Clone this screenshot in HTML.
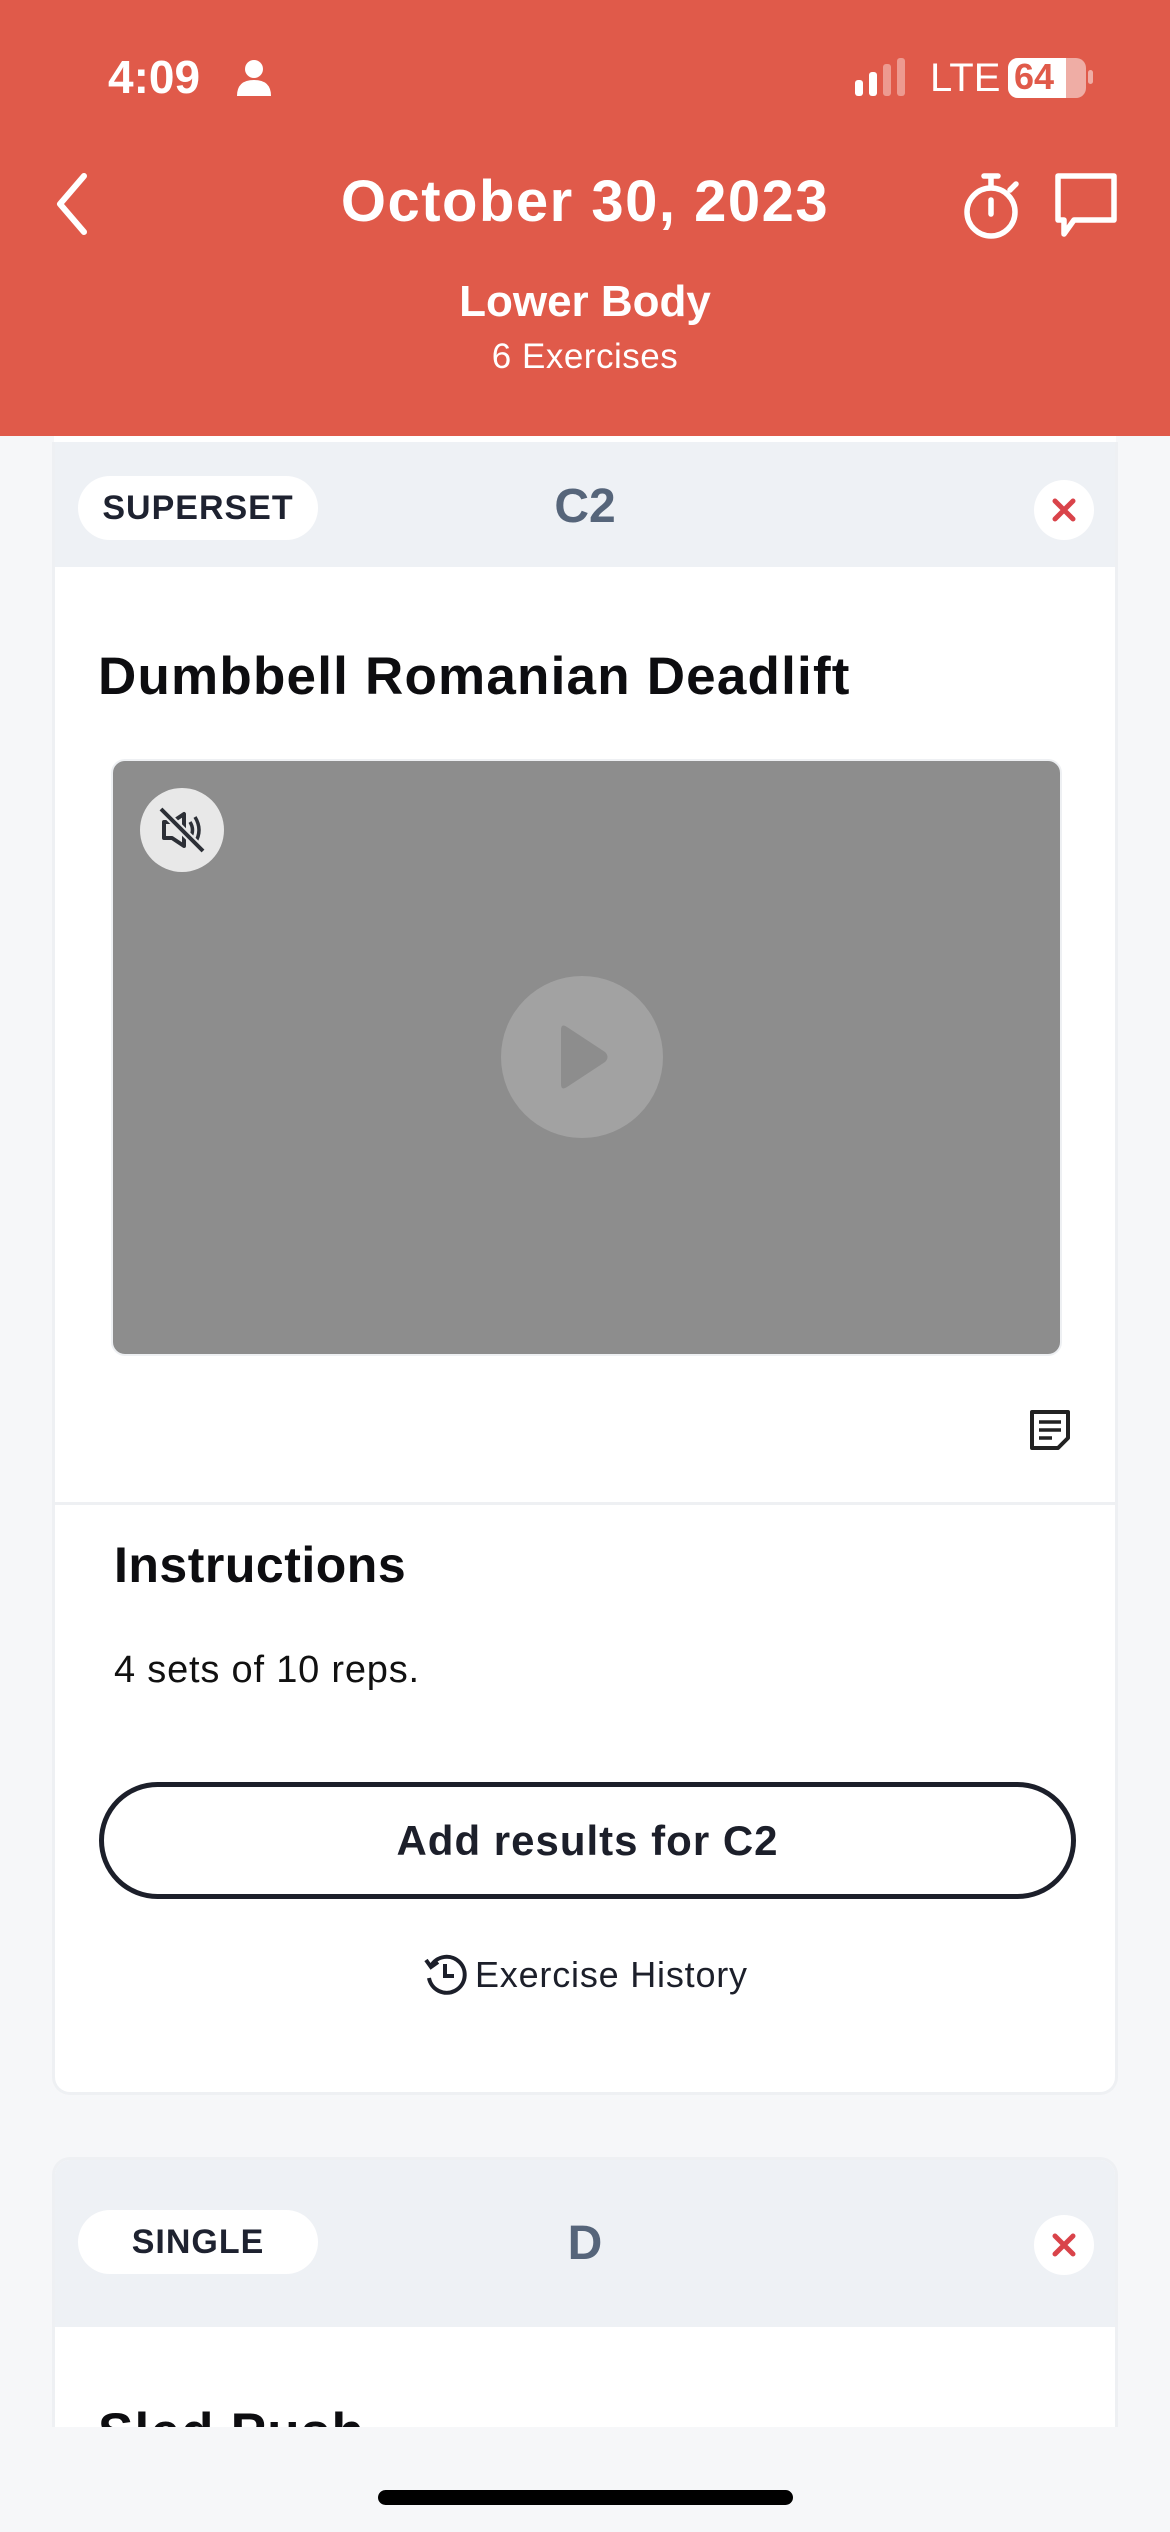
<!DOCTYPE html>
<html><head><meta charset="utf-8"><style>
*{margin:0;padding:0;box-sizing:border-box}
body{width:1170px;height:2532px;background:#f6f7f9;font-family:"Liberation Sans",sans-serif;position:relative;overflow:hidden;color:#111}
.abs{position:absolute}
.hdr{left:0;top:0;width:1170px;height:436px;background:#e05a4a;color:#fff}
.c{text-align:center;width:1170px;left:0}
.card{left:52px;width:1066px;background:#fff;border:3px solid #eef0f3;border-radius:18px;overflow:hidden}
.gh{background:#eef1f5;position:absolute;left:0;width:100%}
.pill{position:absolute;left:23px;width:240px;height:64px;background:#fff;border-radius:32px;font-size:34px;font-weight:bold;color:#1e2230;text-align:center;line-height:64px;letter-spacing:1px}
.xb{position:absolute;left:979px;width:60px;height:60px;border-radius:50%;background:#fff}
.lbl{position:absolute;left:0;width:100%;text-align:center;font-size:48px;font-weight:bold;color:#56657a}
</style></head><body>
<div class="abs hdr">
  <div class="abs" style="left:108px;top:50px;font-size:46px;font-weight:bold">4:09</div>
  <svg class="abs" style="left:234px;top:58px" width="40" height="40" viewBox="0 0 40 40"><circle cx="20" cy="11" r="9" fill="#fff"/><path d="M3 38 Q3 22 20 22 Q37 22 37 38Z" fill="#fff"/></svg>
  <svg class="abs" style="left:855px;top:58px" width="60" height="40"><rect x="0" y="22" width="8" height="16" rx="3" fill="#fff"/><rect x="14" y="14" width="8" height="24" rx="3" fill="#fff"/><rect x="28" y="6" width="8" height="32" rx="3" fill="#ed9a90"/><rect x="42" y="0" width="8" height="38" rx="3" fill="#ed9a90"/></svg>
  <div class="abs" style="left:930px;top:56px;font-size:40px">LTE</div>
  <div class="abs" style="left:1008px;top:58px;width:78px;height:40px;border-radius:10px;background:#efada5;overflow:hidden"><div style="width:58px;height:40px;background:#fff"></div></div>
  <div class="abs" style="left:1014px;top:56px;font-size:36px;font-weight:bold;color:#e05a4a">64</div>
  <div class="abs" style="left:1088px;top:70px;width:5px;height:14px;border-radius:3px;background:#efada5"></div>
  <svg class="abs" style="left:52px;top:172px" width="40" height="64" viewBox="0 0 40 64"><path d="M32 4 L8 32 L32 60" fill="none" stroke="#fff" stroke-width="6" stroke-linecap="round" stroke-linejoin="round"/></svg>
  <div class="abs c" style="top:168px;font-size:58px;font-weight:bold;letter-spacing:1.5px">October 30, 2023</div>
  <svg class="abs" style="left:960px;top:170px" width="64" height="70" viewBox="0 0 64 70"><circle cx="31" cy="42" r="24" fill="none" stroke="#fff" stroke-width="5.5"/><path d="M24 6 H38 M31 6 V17 M31 30 V44 M50 20 L56 14" stroke="#fff" stroke-width="5.5" stroke-linecap="round"/></svg>
  <svg class="abs" style="left:1054px;top:172px" width="64" height="70" viewBox="0 0 64 70"><path d="M4 4 H60 V48 H20 L10 62 V48 H4 Z" fill="none" stroke="#fff" stroke-width="5.5" stroke-linejoin="round"/></svg>
  <div class="abs c" style="top:277px;font-size:44px;font-weight:bold">Lower Body</div>
  <div class="abs c" style="top:337px;font-size:35px;letter-spacing:0.5px">6 Exercises</div>
</div>
<div class="abs" style="left:54px;top:436px;width:1062px;height:10px;background:#fff"></div>
<div class="abs card" style="top:442px;height:1653px;border-top:none;border-radius:0 0 18px 18px">
  <div class="gh" style="top:0;height:125px">
    <div class="pill" style="top:34px">SUPERSET</div>
    <div class="lbl" style="top:37px">C2</div>
    <div class="xb" style="top:38px"><svg width="60" height="60"><path d="M21 21 L39 39 M39 21 L21 39" stroke="#d9434a" stroke-width="5" stroke-linecap="round"/></svg></div>
  </div>
  <div class="abs" style="left:43px;top:204px;font-size:53px;font-weight:bold;color:#0d0d10;letter-spacing:1.2px">Dumbbell Romanian Deadlift</div>
  <div class="abs" style="left:56px;top:317px;width:951px;height:597px;background:#8d8d8d;border-radius:14px;border:2px solid #eef0f3">
    <div class="abs" style="left:27px;top:27px;width:84px;height:84px;border-radius:50%;background:#e8e8e8">
      <svg width="84" height="84" viewBox="0 0 84 84"><path d="M24 34 H32 L44 26 V58 L32 50 H24 Z" fill="none" stroke="#2c2f36" stroke-width="4" stroke-linejoin="round"/><path d="M50 34 Q55 42 50 50 M55 29 Q63 42 55 55" fill="none" stroke="#2c2f36" stroke-width="3.5"/><path d="M21 21 L63 63" stroke="#e8e8e8" stroke-width="8"/><path d="M21 21 L63 63" stroke="#2c2f36" stroke-width="4"/></svg>
    </div>
    <div class="abs" style="left:388px;top:215px;width:162px;height:162px;border-radius:50%;background:#a2a2a2">
      <svg width="162" height="162"><path d="M60 54 Q60 47 66 51 L104 76 Q109 81 104 86 L66 111 Q60 115 60 108 Z" fill="#8d8d8d"/></svg>
    </div>
  </div>
  <svg class="abs" style="left:973px;top:966px" width="44" height="44" viewBox="0 0 44 44"><path d="M4 4 H40 V30 L30 40 H4 Z" fill="none" stroke="#222" stroke-width="4" stroke-linejoin="round"/><path d="M11 14 H33 M11 22 H33 M11 30 H24" stroke="#222" stroke-width="3.5"/></svg>
  <div class="abs" style="left:0;top:1060px;width:100%;height:3px;background:#eef0f3"></div>
  <div class="abs" style="left:59px;top:1094px;font-size:50px;font-weight:bold;color:#0d0d10;letter-spacing:0.5px">Instructions</div>
  <div class="abs" style="left:59px;top:1207px;font-size:38px;color:#111;letter-spacing:0.8px">4 sets of 10 reps.</div>
  <div class="abs" style="left:44px;top:1340px;width:977px;height:117px;border:5px solid #1c1f2a;border-radius:60px;text-align:center;line-height:107px;font-size:42px;font-weight:bold;color:#1c1f2a;letter-spacing:1px">Add results for C2</div>
  <svg class="abs" style="left:368px;top:1510px" width="46" height="46" viewBox="0 0 46 46"><path d="M8 14 A18 18 0 1 1 6 26" fill="none" stroke="#1c1f2a" stroke-width="4"/><path d="M3 8 L8 15 L15 10" fill="none" stroke="#1c1f2a" stroke-width="4"/><path d="M22 12 V24 H31" fill="none" stroke="#1c1f2a" stroke-width="4"/></svg>
  <div class="abs" style="left:420px;top:1512px;font-size:36px;color:#1c1f2a;letter-spacing:0.8px">Exercise History</div>
</div>
<div class="abs card" style="top:2157px;height:270px;border-radius:18px 18px 0 0;border-bottom:none">
  <div class="gh" style="top:0;height:167px">
    <div class="pill" style="top:50px">SINGLE</div>
    <div class="lbl" style="top:56px">D</div>
    <div class="xb" style="top:55px"><svg width="60" height="60"><path d="M21 21 L39 39 M39 21 L21 39" stroke="#d9434a" stroke-width="5" stroke-linecap="round"/></svg></div>
  </div>
  <div class="abs" style="left:43px;top:242px;font-size:53px;font-weight:bold;color:#0d0d10;letter-spacing:1.2px">Sled Push</div>
</div>
<div class="abs" style="left:0;top:2427px;width:1170px;height:105px;background:#f6f7f9"></div>
<div class="abs" style="left:378px;top:2490px;width:415px;height:15px;border-radius:8px;background:#000"></div>
</body></html>
